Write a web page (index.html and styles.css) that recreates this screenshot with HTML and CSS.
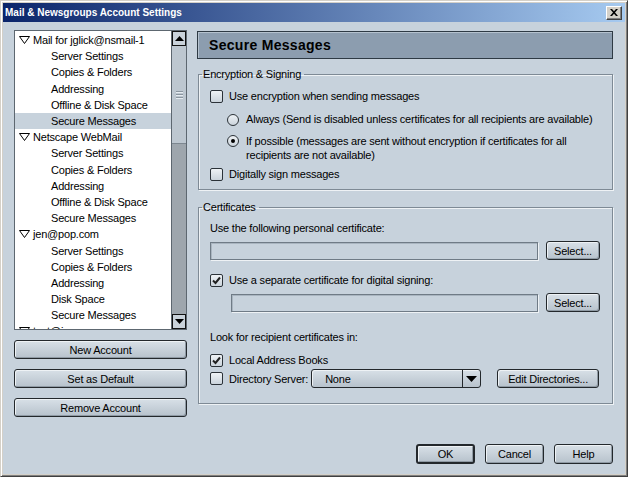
FILE: index.html
```html
<!DOCTYPE html>
<html>
<head>
<meta charset="utf-8">
<link rel="stylesheet" href="styles.css">
</head>
<body>
<div class="window">
  <div class="titlebar">
    <span class="title">Mail &amp; Newsgroups Account Settings</span>
    <span class="close"><svg width="8" height="7" viewBox="0 0 8 7"><path d="M0 0h2l2 2.3L6 0h2L5 3.5 8 7H6L4 4.7 2 7H0l3-3.5z" fill="#000"/></svg></span>
  </div>
  <div class="body">
    <div class="main">
      <div class="left">
        <div class="tree">
          <ul class="tree-list">
            <li class="acct"><svg class="tri" width="11" height="8" viewBox="0 0 11 8"><path d="M0.5 0.5h10L5.5 7.5z" fill="#fff" stroke="#000"/></svg>Mail for jglick@nsmail-1</li>
            <li class="sub">Server Settings</li>
            <li class="sub">Copies &amp; Folders</li>
            <li class="sub">Addressing</li>
            <li class="sub">Offline &amp; Disk Space</li>
            <li class="sub selected">Secure Messages</li>
            <li class="acct"><svg class="tri" width="11" height="8" viewBox="0 0 11 8"><path d="M0.5 0.5h10L5.5 7.5z" fill="#fff" stroke="#000"/></svg>Netscape WebMail</li>
            <li class="sub">Server Settings</li>
            <li class="sub">Copies &amp; Folders</li>
            <li class="sub">Addressing</li>
            <li class="sub">Offline &amp; Disk Space</li>
            <li class="sub">Secure Messages</li>
            <li class="acct"><svg class="tri" width="11" height="8" viewBox="0 0 11 8"><path d="M0.5 0.5h10L5.5 7.5z" fill="#fff" stroke="#000"/></svg>jen@pop.com</li>
            <li class="sub">Server Settings</li>
            <li class="sub">Copies &amp; Folders</li>
            <li class="sub">Addressing</li>
            <li class="sub">Disk Space</li>
            <li class="sub">Secure Messages</li>
            <li class="acct"><svg class="tri" width="11" height="8" viewBox="0 0 11 8"><path d="M0.5 0.5h10L5.5 7.5z" fill="#fff" stroke="#000"/></svg>test@imap.com</li>
          </ul>
          <div class="scrollbar">
            <div class="sb-btn"><svg width="9" height="5" viewBox="0 0 9 5"><path d="M0 5h9L4.5 0z" fill="#000"/></svg></div>
            <div class="sb-track">
              <div class="sb-thumb"><span class="grip"></span><span class="grip"></span><span class="grip"></span></div>
            </div>
            <div class="sb-btn"><svg width="9" height="5" viewBox="0 0 9 5"><path d="M0 0h9L4.5 5z" fill="#000"/></svg></div>
          </div>
        </div>
        <div class="acct-buttons">
          <button class="btn wide">New Account</button>
          <button class="btn wide">Set as Default</button>
          <button class="btn wide">Remove Account</button>
        </div>
      </div>
      <div class="right">
        <div class="page-header">Secure Messages</div>
        <fieldset class="group enc">
          <legend>Encryption &amp; Signing</legend>
          <div class="row first"><span class="check"></span>Use encryption when sending messages</div>
          <div class="radios">
            <div class="row radio-row"><span class="radio"></span>Always (Send is disabled unless certificates for all recipients are available)</div>
            <div class="row radio-row"><span class="radio on"></span><span class="radio-text">If possible (messages are sent without encryption if certificates for all recipients are not available)</span></div>
          </div>
          <div class="row last"><span class="check"></span>Digitally sign messages</div>
        </fieldset>
        <fieldset class="group certs">
          <legend>Certificates</legend>
          <div class="label">Use the following personal certificate:</div>
          <div class="field-row"><span class="input"></span><button class="btn select">Select...</button></div>
          <div class="row sep-row"><span class="check checked"><svg width="11" height="11" viewBox="0 0 11 11"><path d="M2 5.5l2.5 2.5L9 2.5" fill="none" stroke="#222" stroke-width="2"/></svg></span>Use a separate certificate for digital signing:</div>
          <div class="field-row indent"><span class="input"></span><button class="btn select">Select...</button></div>
          <div class="label look">Look for recipient certificates in:</div>
          <div class="row local-row"><span class="check checked"><svg width="11" height="11" viewBox="0 0 11 11"><path d="M2 5.5l2.5 2.5L9 2.5" fill="none" stroke="#222" stroke-width="2"/></svg></span>Local Address Books</div>
          <div class="row dir-row"><span class="check"></span><span class="dir-label">Directory Server:</span>
            <span class="dropdown"><span class="dd-text">None</span><span class="dd-arrow"><svg width="11" height="6" viewBox="0 0 11 6"><path d="M0 0h11L5.5 6z" fill="#000"/></svg></span></span>
            <button class="btn edit">Edit Directories...</button>
          </div>
        </fieldset>
      </div>
    </div>
    <div class="footer">
      <button class="btn foot default">OK</button>
      <button class="btn foot">Cancel</button>
      <button class="btn foot">Help</button>
    </div>
  </div>
</div>
</body>
</html>
```

FILE: styles.css
```css
* { box-sizing: border-box; }
html, body { margin: 0; padding: 0; }
body {
  font-family: "Liberation Sans", Arial, sans-serif;
  font-size: 11px;
  letter-spacing: -0.2px;
  color: #000;
  background: #c7d2dc;
}
.window {
  width: 628px;
  height: 477px;
  display: flex;
  flex-direction: column;
  background: #d4d0c8;
  border: 1px solid;
  border-color: #d4d0c8 #404040 #404040 #d4d0c8;
  box-shadow: inset 1px 1px #fff, inset -1px -1px #808080;
  padding: 2px;
}
.titlebar {
  height: 19px;
  flex: none;
  display: flex;
  align-items: center;
  justify-content: space-between;
  padding: 0 3px 0 2px;
  background: linear-gradient(to right, #0a246a, #a6caf0);
}
.title {
  color: #fff;
  font-weight: bold;
  font-size: 10px;
  letter-spacing: 0;
}
.close {
  width: 16px;
  height: 14px;
  display: flex;
  align-items: center;
  justify-content: center;
  background: #d4d0c8;
  border: 1px solid;
  border-color: #fff #404040 #404040 #fff;
  box-shadow: inset -1px -1px #808080;
}
.body {
  flex: 1;
  display: flex;
  flex-direction: column;
  background: #c7d2dc;
  padding: 8px 10px 10px 11px;
}
.main {
  display: flex;
  gap: 10px;
}
.left {
  width: 173px;
  flex: none;
}
.tree {
  height: 300px;
  display: flex;
  background: #fff;
  border: 1px solid #5d6770;
  overflow: hidden;
}
.tree-list {
  list-style: none;
  margin: 0;
  padding: 1px 0 0 0;
  flex: 1;
  overflow: hidden;
}
.tree-list li {
  height: 16.2px;
  line-height: 16px;
  white-space: nowrap;
  display: flex;
  align-items: center;
}
.tree-list .acct { padding-left: 4px; }
.tree-list .tri { margin-right: 3px; flex: none; }
.tree-list .sub { padding-left: 36px; }
.tree-list .selected { background: #c7d2dc; }
.scrollbar {
  width: 15px;
  flex: none;
  display: flex;
  flex-direction: column;
  background: #9ea6ad;
  border-left: 1px solid #5d6770;
}
.sb-btn {
  height: 15px;
  flex: none;
  display: flex;
  align-items: center;
  justify-content: center;
  background: #c9d2da;
  border: 1px solid #111;
}
.sb-track { flex: 1; }
.sb-thumb {
  height: 98px;
  background: #bdc7d0;
  border-bottom: 1px solid #7d8790;
  display: flex;
  flex-direction: column;
  align-items: center;
  justify-content: center;
  gap: 2px;
}
.grip {
  width: 7px;
  height: 1px;
  background: #8b96a0;
  box-shadow: 0 1px #e6ecf1;
}
.acct-buttons {
  display: flex;
  flex-direction: column;
  gap: 10px;
  margin-top: 10px;
}
.btn {
  font-family: "Liberation Sans", Arial, sans-serif;
  font-size: 11px;
  letter-spacing: -0.2px;
  color: #000;
  height: 19px;
  padding: 0 4px;
  border: 1px solid #23282c;
  border-radius: 3px;
  background: linear-gradient(#d8e0e7, #b7c2cc);
  box-shadow: inset 1px 1px #eef2f5, inset -1px -1px #8f9aa4;
}
.btn.wide { width: 173px; }
.right {
  width: 416px;
  flex: none;
  padding-top: 1px;
}
.page-header {
  height: 28px;
  display: flex;
  align-items: center;
  padding-left: 11px;
  font-weight: bold;
  font-size: 14px;
  letter-spacing: 0.3px;
  background: #8c9daf;
  border: 1px solid #2e3a44;
  box-shadow: inset 1px 1px #b5c2ce;
}
.group {
  margin: 9px 0 0 1px;
  padding: 4px 12px 8px 11px;
  border: 1px solid #7e8a95;
  box-shadow: inset 1px 1px #eef2f5, 1px 1px #eef2f5;
  min-width: 0;
}
.group legend {
  padding: 0 3px 0 1px;
  margin-left: -8px;
}
.row {
  display: flex;
  align-items: center;
  white-space: nowrap;
}
.check {
  width: 13px;
  height: 13px;
  flex: none;
  margin-right: 6px;
  border: 1px solid #2b3238;
  border-radius: 2px;
  background: linear-gradient(#eef2f5, #cbd4dc);
  display: flex;
  align-items: center;
  justify-content: center;
}
.enc .row { height: 14px; }
.enc .row.first { margin-top: 5px; }
.radios { padding-left: 17px; }
.radio-row { margin-top: 10px; align-items: flex-start; }
.radio-row + .radio-row { margin-top: 8px; }
.enc .radio-row { height: auto; }
.radio {
  width: 12px;
  height: 12px;
  flex: none;
  margin-right: 7px;
  border: 1px solid #2b3238;
  border-radius: 50%;
  background: linear-gradient(#eef2f5, #cbd4dc);
  display: flex;
  align-items: center;
  justify-content: center;
  margin-top: 1px;
}
.radio.on::after {
  content: "";
  width: 4px;
  height: 4px;
  border-radius: 50%;
  background: #000;
}
.radio-text {
  white-space: normal;
  line-height: 14px;
  width: 330px;
}
.enc .row.last { margin-top: 5px; }
.certs { margin-top: 11px; padding-bottom: 15px; }
.label { margin-top: 4px; height: 14px; line-height: 14px; }
.field-row {
  display: flex;
  align-items: center;
  gap: 8px;
  margin-top: 6px;
}
.field-row.indent { padding-left: 21px; margin-top: 6px; }
.input {
  flex: 1;
  height: 18px;
  border: 1px solid #6f7b86;
  box-shadow: inset 1px 1px #a9b5c0, 1px 1px #eef2f5;
  background: #c7d2dc;
}
.btn.select { width: 54px; flex: none; }
.certs .row { height: 14px; }
.certs .sep-row { margin-top: 13px; }
.certs .label.look { margin-top: 18px; }
.certs .local-row { margin-top: 9px; }
.certs .dir-row { height: 19px; margin-top: 2px; }
.dir-label { margin-right: 3px; }
.dropdown {
  width: 170px;
  height: 19px;
  display: flex;
  align-items: center;
  border: 1px solid #23282c;
  border-radius: 3px;
  background: linear-gradient(#d8e0e7, #b7c2cc);
  box-shadow: inset 1px 1px #eef2f5;
}
.dd-text { flex: 1; padding-left: 13px; }
.dd-arrow {
  width: 18px;
  height: 100%;
  display: flex;
  align-items: center;
  justify-content: center;
  border-left: 1px solid #23282c;
}
.btn.edit { width: 102px; margin-left: 16px; flex: none; }
.footer {
  margin-top: auto;
  display: flex;
  justify-content: flex-end;
  gap: 10px;
  padding-right: 2px;
}
.btn.foot { width: 59px; height: 20px; }
.btn.default { border-width: 2px; }
```
